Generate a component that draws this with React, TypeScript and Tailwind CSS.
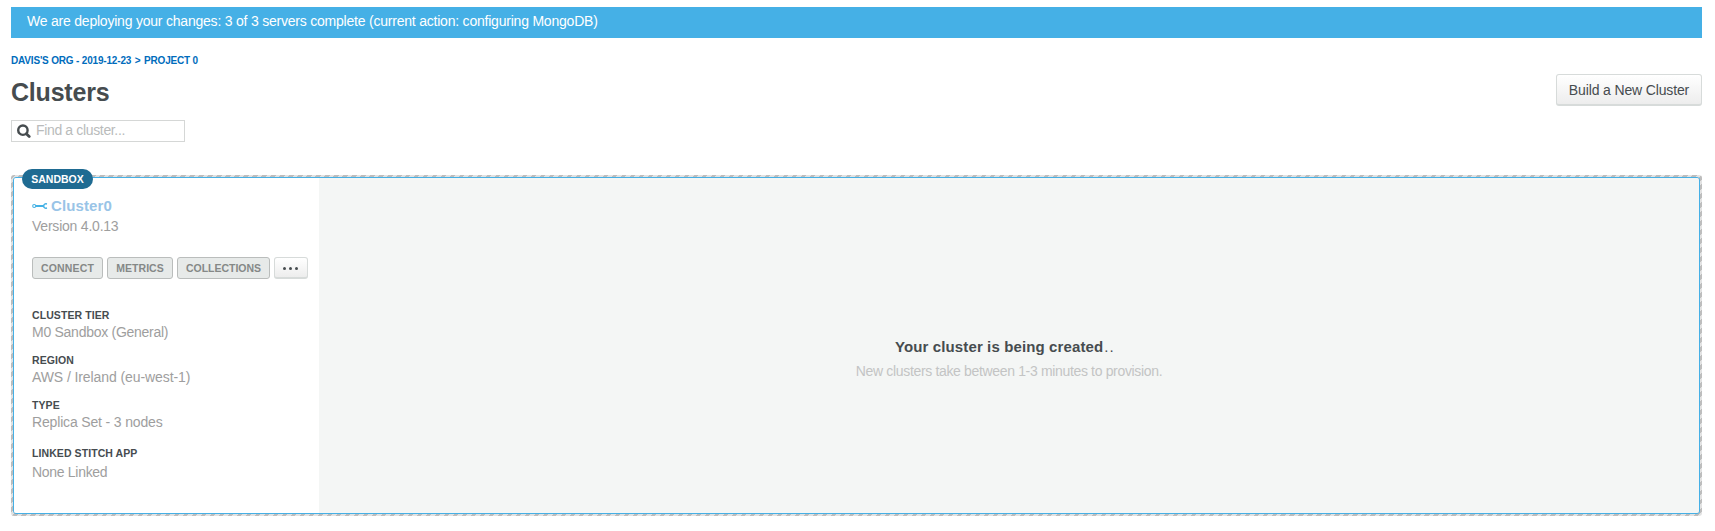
const actions = [
  { label: 'CONNECT', size: 'w-[71px]', track: 'tracking-[0.15px]' },
  { label: 'METRICS', size: 'w-[66px]', track: 'tracking-[0.05px]' },
  { label: 'COLLECTIONS', size: 'w-[93px]', track: 'tracking-normal' },
];

const details = [
  { label: 'CLUSTER TIER', value: 'M0 Sandbox (General)', block: 'h-[45px]', gap: 'mt-0', track: 'tracking-[-0.27px]' },
  { label: 'REGION', value: 'AWS / Ireland (eu-west-1)', block: 'h-[45px]', gap: 'mt-0', track: 'tracking-[-0.09px]' },
  { label: 'TYPE', value: 'Replica Set - 3 nodes', block: 'h-[48px]', gap: 'mt-0', track: 'tracking-[-0.16px]' },
  { label: 'LINKED STITCH APP', value: 'None Linked', block: 'h-[45px]', gap: 'mt-[2px]', track: 'tracking-[-0.3px]' },
];

function SearchIcon() {
  return (
    <svg width="15" height="15" viewBox="0 0 15 15" fill="none" stroke="#464c4f" className="shrink-0">
      <circle cx="6.9" cy="6.2" r="4.7" strokeWidth="2.4" />
      <path d="M10.3 9.7L13.2 12.6" strokeWidth="2.8" strokeLinecap="round" />
    </svg>
  );
}

function WrenchIcon() {
  return (
    <svg width="16" height="6" viewBox="0 0 16 6" fill="none" stroke="#43b1e5" className="shrink-0">
      <circle cx="2.2" cy="3" r="1.5" strokeWidth="1.1" />
      <path d="M4 3H11.5" strokeWidth="2" />
      <path d="M15 1C12.8 0.5 11.7 1.5 11.7 3C11.7 4.5 12.8 5.5 15 5" strokeWidth="1.5" />
    </svg>
  );
}

export default function App() {
  return (
    <main className="h-[531px] overflow-hidden bg-white pt-[7px] pr-[13px] pl-[11px] font-['Liberation_Sans',Arial,sans-serif] text-sm whitespace-nowrap text-[#464c4f]">
      <div className="h-[31px] bg-[#45b0e6] pl-4 leading-[29px] tracking-[-0.215px] text-white">
        We are deploying your changes: 3 of 3 servers complete (current action: configuring MongoDB)
      </div>

      <header className="flex h-[82px] justify-between">
        <div>
          <nav className="mt-[15px] h-[15px] text-[10px] leading-[15px] font-bold tracking-[-0.18px] text-[#006cbc]">
            DAVIS'S ORG - 2019-12-23 <span className="mx-px">&gt;</span> PROJECT 0
          </nav>
          <h1 className="mt-[9px] text-[25px] leading-[30px] font-bold tracking-[-0.2px]">Clusters</h1>
        </div>
        <button className="mt-9 h-8 w-[146px] rounded-[3px] border border-b-2 border-[#d7dbda] bg-linear-to-b from-white to-[#ededed] pt-px leading-[27px] tracking-[-0.14px]">
          Build a New Cluster
        </button>
      </header>

      <label className="flex h-[22px] w-[174px] items-center border border-[#d5d7d6] pl-1">
        <SearchIcon />
        <input
          placeholder="Find a cluster..."
          className="ml-[5px] h-5 w-[140px] pb-0.5 leading-[18px] tracking-[-0.35px] outline-none placeholder:text-[#b9bbbb]"
        />
      </label>

      <section className="relative mt-[33px] h-[341px] rounded-[3px] bg-[repeating-linear-gradient(135deg,#bdbdbd_0px,#bdbdbd_3px,#e2e2e2_3px,#e2e2e2_6.36px)] p-0.5">
        <div className="flex h-[337px] overflow-hidden rounded-[3px] border border-[#45b0e6]">
          <div className="w-[305px] shrink-0 bg-white pl-[18px]">
            <div className="mt-[18px] flex h-5 items-center gap-[3px]">
              <WrenchIcon />
              <h2 className="text-[15px] leading-5 font-bold tracking-[0.1px] text-[#99c4e7]">Cluster0</h2>
            </div>
            <p className="h-5 leading-5 tracking-[-0.22px] text-[#9e9e9e]">Version 4.0.13</p>

            <div className="mt-[21px] flex gap-1">
              {actions.map((action) => (
                <button
                  key={action.label}
                  className={`${action.size} ${action.track} h-[22px] rounded-[3px] border border-[#babdbc] bg-[#e7eae9] text-[10.5px] leading-5 font-bold text-[#858887]`}
                >
                  {action.label}
                </button>
              ))}
              <button className="flex h-[22px] w-[34px] items-center justify-center gap-[3px] rounded-[3px] border border-b-2 border-[#d7dbda] bg-linear-to-b from-white to-[#ededed] pt-px pr-px">
                <span className="size-[3px] rounded-full bg-[#464c4f]" />
                <span className="size-[3px] rounded-full bg-[#464c4f]" />
                <span className="size-[3px] rounded-full bg-[#464c4f]" />
              </button>
            </div>

            <dl className="mt-[28px]">
              {details.map((item) => (
                <div key={item.label} className={item.block}>
                  <dt className="h-4 text-[10.5px] leading-4 font-bold tracking-[0.08px]">{item.label}</dt>
                  <dd className={`${item.track} ${item.gap} leading-[18px] text-[#9e9e9e]`}>{item.value}</dd>
                </div>
              ))}
            </dl>
          </div>

          <div className="flex-1 bg-[#f4f6f5] pt-[159px] text-center">
            <p className="pr-[8px] text-[15px] leading-5 font-bold tracking-[0.12px]">
              Your cluster is being created<span className="ml-px font-normal tracking-[1.2px]">..</span>
            </p>
            <p className="mt-1 leading-5 tracking-[-0.34px] text-[#c3c4c4]">
              New clusters take between 1-3 minutes to provision.
            </p>
          </div>
        </div>

        <span className="absolute top-[-6px] left-[11px] h-5 w-[71px] rounded-full bg-[#1f6b92] text-center text-[10.5px] leading-5 font-bold text-white">
          SANDBOX
        </span>
      </section>
    </main>
  );
}
